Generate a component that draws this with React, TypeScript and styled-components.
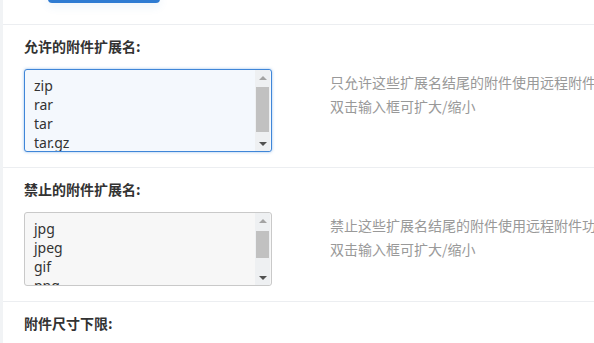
import React from "react";
import styled, { createGlobalStyle } from "styled-components";

const GlobalStyle = createGlobalStyle`
  html, body {
    margin: 0;
    padding: 0;
    background: #f1f3f5;
    overflow: hidden;
  }
  body {
    font-family: "Noto Sans", "Noto Sans CJK SC", sans-serif;
    color: #333;
  }
`;

const Page = styled.div`
  margin-left: 3px;
  background: #fff;
  height: 343px;
  overflow: hidden;
`;

const Toolbar = styled.div`
  height: 24px;
  padding-left: 45px;
  border-bottom: 1px solid #eceef1;
  overflow: hidden;
`;

const SaveButton = styled.div`
  width: 112px;
  height: 32px;
  margin-top: -29px;
  background: #2f7bd2;
  border-radius: 4px;
  box-shadow: 0 4px 10px rgba(47, 123, 210, 0.08);
`;

const Section = styled.div`
  padding: 10px 0 15px 21px;
  border-bottom: 1px solid #eceef1;
`;

const Label = styled.div`
  font-family: "Noto Sans CJK SC", sans-serif;
  font-size: 14px;
  font-weight: 700;
  line-height: 22px;
  color: #333;
`;

const Row = styled.div`
  display: flex;
  align-items: flex-start;
  margin-top: 12px;
`;

const Box = styled.div<{ $focused?: boolean; $h: number }>`
  box-sizing: border-box;
  flex: 0 0 248px;
  width: 248px;
  height: ${(p) => p.$h}px;
  display: flex;
  border: 1px solid ${(p) => (p.$focused ? "#3f86d8" : "#c9c9c9")};
  border-radius: 3px;
  background: ${(p) => (p.$focused ? "#f4f8fd" : "#f7f7f7")};
  box-shadow: ${(p) => (p.$focused ? "0 0 3px rgba(63, 134, 216, 0.55)" : "none")};
  overflow: hidden;
`;

const Field = styled.textarea`
  flex: 1;
  min-width: 0;
  margin: 0;
  border: none;
  outline: none;
  resize: none;
  overflow: hidden;
  background: transparent;
  padding: 6px 0 0 9px;
  font-family: "Noto Sans", "Noto Sans CJK SC", sans-serif;
  font-size: 14px;
  line-height: 19px;
  color: #333;
`;

const ScrollBar = styled.div`
  width: 15px;
  display: flex;
  flex-direction: column;
  background: #eef0f2;
  margin-right: 1px;
`;

const Arrow = styled.div<{ $down?: boolean; $dim?: boolean }>`
  height: 15px;
  display: flex;
  align-items: center;
  justify-content: center;
  &::after {
    content: "";
    width: 0;
    height: 0;
    border-left: 4px solid transparent;
    border-right: 4px solid transparent;
    ${(p) =>
      p.$down
        ? `border-top: 4px solid ${p.$dim ? "#a3a3a3" : "#505050"};`
        : `border-bottom: 4px solid ${p.$dim ? "#a3a3a3" : "#505050"};`}
  }
`;

const Track = styled.div`
  flex: 1;
  display: flex;
  flex-direction: column;
`;

const Thumb = styled.div<{ $top: number; $len: number }>`
  margin: ${(p) => p.$top}px 1px 0;
  height: ${(p) => p.$len}px;
  background: #c1c1c1;
`;

const Hint = styled.div`
  flex: none;
  margin-left: 58px;
  padding-top: 1px;
  font-family: "Noto Sans CJK SC", sans-serif;
  font-size: 14px;
  line-height: 24px;
  color: #999;
  white-space: nowrap;
`;

type ExtProps = {
  label: string;
  value: string;
  hint: string;
  height: number;
  focused?: boolean;
  thumbTop: number;
  thumbLen: number;
};

function ExtField({ label, value, hint, height, focused, thumbTop, thumbLen }: ExtProps) {
  return (
    <Section>
      <Label>{label}</Label>
      <Row>
        <Box $focused={focused} $h={height}>
          <Field defaultValue={value} spellCheck={false} readOnly />
          <ScrollBar>
            <Arrow $dim />
            <Track>
              <Thumb $top={thumbTop} $len={thumbLen} />
            </Track>
            <Arrow $down />
          </ScrollBar>
        </Box>
        <Hint>
          {hint}
          <br />
          双击输入框可扩大/缩小
        </Hint>
      </Row>
    </Section>
  );
}

export default function App() {
  return (
    <>
      <GlobalStyle />
      <Page>
        <Toolbar>
          <SaveButton />
        </Toolbar>
        <ExtField
          label="允许的附件扩展名:"
          value={"zip\nrar\ntar\ntar.gz\n7z\nbz2"}
          hint="只允许这些扩展名结尾的附件使用远程附件功能"
          height={83}
          focused
          thumbTop={2}
          thumbLen={45}
        />
        <ExtField
          label="禁止的附件扩展名:"
          value={"jpg\njpeg\ngif\npng\nbmp\nwebp"}
          hint="禁止这些扩展名结尾的附件使用远程附件功能"
          height={74}
          thumbTop={3}
          thumbLen={27}
        />
        <Section>
          <Label>附件尺寸下限:</Label>
        </Section>
      </Page>
    </>
  );
}
